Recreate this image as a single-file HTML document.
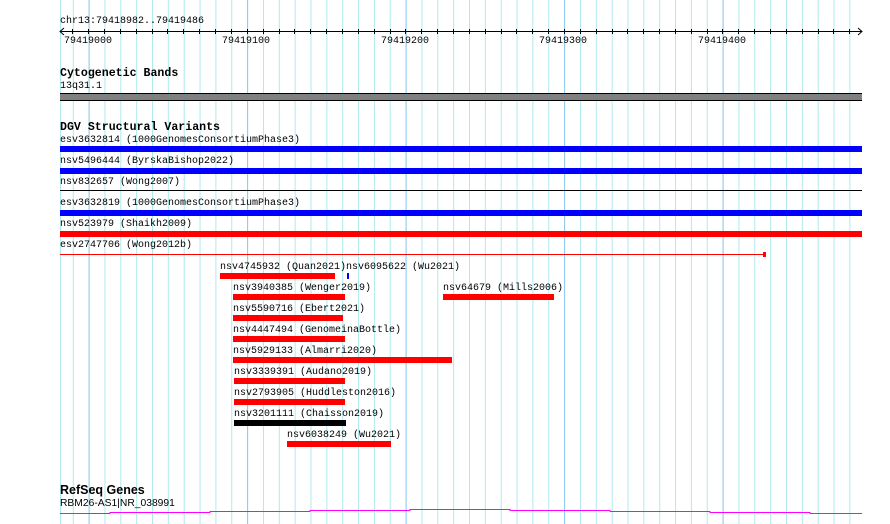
<!DOCTYPE html>
<html><head><meta charset="utf-8"><style>
body{margin:0;width:890px;height:524px;background:#fff;overflow:hidden;position:relative;font-family:"Liberation Mono",monospace;font-size:10px;color:#000}
.t{position:absolute;line-height:11px;white-space:pre;margin-top:1px}
.b{font-weight:bold;font-size:11.6px;line-height:12px}
svg{position:absolute;left:0;top:0}
</style></head><body>
<svg width="890" height="524" shape-rendering="crispEdges">
<defs>
<pattern id="mn" patternUnits="userSpaceOnUse" x="72.75" y="0" width="15.85" height="10"><rect x="0" y="0" width="1" height="10" fill="#aeeaee"/></pattern>
<pattern id="mj" patternUnits="userSpaceOnUse" x="88.6" y="0" width="158.5" height="10"><rect x="0" y="0" width="1" height="10" fill="#8fc8ee"/></pattern>
</defs>
<rect x="60" y="0" width="1" height="524" fill="#aeeaee"/>
<rect x="72" y="0" width="779" height="524" fill="url(#mn)"/>
<rect x="88" y="0" width="760" height="524" fill="url(#mj)"/>
<rect x="60" y="31" width="802" height="1" fill="#000"/>
<path d="M64 28 L60 31.5 L64 35 M858 28 L862 31.5 L858 35" stroke="#000" fill="none" shape-rendering="auto"/>
<g fill="#000">
<rect x="72" y="29" width="1" height="5"/><rect x="88" y="29" width="1" height="5"/><rect x="104" y="29" width="1" height="5"/><rect x="120" y="29" width="1" height="5"/><rect x="136" y="29" width="1" height="5"/><rect x="152" y="29" width="1" height="5"/><rect x="167" y="29" width="1" height="5"/><rect x="183" y="29" width="1" height="5"/><rect x="199" y="29" width="1" height="5"/><rect x="215" y="29" width="1" height="5"/><rect x="231" y="29" width="1" height="5"/><rect x="247" y="29" width="1" height="5"/><rect x="263" y="29" width="1" height="5"/><rect x="279" y="29" width="1" height="5"/><rect x="294" y="29" width="1" height="5"/><rect x="310" y="29" width="1" height="5"/><rect x="326" y="29" width="1" height="5"/><rect x="342" y="29" width="1" height="5"/><rect x="358" y="29" width="1" height="5"/><rect x="374" y="29" width="1" height="5"/><rect x="390" y="29" width="1" height="5"/><rect x="405" y="29" width="1" height="5"/><rect x="421" y="29" width="1" height="5"/><rect x="437" y="29" width="1" height="5"/><rect x="453" y="29" width="1" height="5"/><rect x="469" y="29" width="1" height="5"/><rect x="485" y="29" width="1" height="5"/><rect x="501" y="29" width="1" height="5"/><rect x="516" y="29" width="1" height="5"/><rect x="532" y="29" width="1" height="5"/><rect x="548" y="29" width="1" height="5"/><rect x="564" y="29" width="1" height="5"/><rect x="580" y="29" width="1" height="5"/><rect x="596" y="29" width="1" height="5"/><rect x="612" y="29" width="1" height="5"/><rect x="627" y="29" width="1" height="5"/><rect x="643" y="29" width="1" height="5"/><rect x="659" y="29" width="1" height="5"/><rect x="675" y="29" width="1" height="5"/><rect x="691" y="29" width="1" height="5"/><rect x="707" y="29" width="1" height="5"/><rect x="722" y="29" width="1" height="5"/><rect x="738" y="29" width="1" height="5"/><rect x="754" y="29" width="1" height="5"/><rect x="770" y="29" width="1" height="5"/><rect x="786" y="29" width="1" height="5"/><rect x="802" y="29" width="1" height="5"/><rect x="818" y="29" width="1" height="5"/><rect x="833" y="29" width="1" height="5"/><rect x="849" y="29" width="1" height="5"/>
</g>
<rect x="60" y="93" width="802" height="8" fill="#000"/>
<rect x="60" y="94" width="802" height="6" fill="#808080"/>
<rect x="60" y="146" width="802" height="6" fill="#0000ff"/>
<rect x="60" y="168" width="802" height="6" fill="#0000ff"/>
<rect x="60" y="190" width="802" height="1" fill="#000"/>
<rect x="60" y="210" width="802" height="6" fill="#0000ff"/>
<rect x="60" y="231" width="802" height="6" fill="#ff0000"/>
<rect x="60" y="254" width="705" height="1" fill="#ff0000"/>
<rect x="763" y="252" width="3" height="5" fill="#ff0000"/>
<rect x="220" y="273" width="115" height="6" fill="#ff0000"/>
<rect x="347" y="273" width="2" height="6" fill="#0000ff"/>
<rect x="233" y="294" width="112" height="6" fill="#ff0000"/>
<rect x="443" y="294" width="111" height="6" fill="#ff0000"/>
<rect x="233" y="315" width="110" height="6" fill="#ff0000"/>
<rect x="233" y="336" width="112" height="6" fill="#ff0000"/>
<rect x="233" y="357" width="219" height="6" fill="#ff0000"/>
<rect x="234" y="378" width="111" height="6" fill="#ff0000"/>
<rect x="234" y="399" width="111" height="6" fill="#ff0000"/>
<rect x="234" y="420" width="112" height="6" fill="#000"/>
<rect x="287" y="441" width="104" height="6" fill="#ff0000"/>
<path d="M60 513.5H110V512.5H210V511.5H310V510.5H410V509.5H510V510.5H610V511.5H710V512.5H810V513.5H862" stroke="#ff00ff" fill="none"/>
</svg>
<div class="t" style="left:60px;top:15px">chr13:79418982..79419486</div>
<div class="t" style="left:64px;top:35px">79419000</div>
<div class="t" style="left:222px;top:35px">79419100</div>
<div class="t" style="left:381px;top:35px">79419200</div>
<div class="t" style="left:539px;top:35px">79419300</div>
<div class="t" style="left:698px;top:35px">79419400</div>
<div class="t b" style="left:60px;top:67px">Cytogenetic Bands</div>
<div class="t" style="left:60px;top:80px">13q31.1</div>
<div class="t b" style="left:60px;top:121px">DGV Structural Variants</div>
<div class="t" style="left:60px;top:134px">esv3632814 (1000GenomesConsortiumPhase3)</div>
<div class="t" style="left:60px;top:155px">nsv5496444 (ByrskaBishop2022)</div>
<div class="t" style="left:60px;top:176px">nsv832657 (Wong2007)</div>
<div class="t" style="left:60px;top:197px">esv3632819 (1000GenomesConsortiumPhase3)</div>
<div class="t" style="left:60px;top:218px">nsv523979 (Shaikh2009)</div>
<div class="t" style="left:60px;top:239px">esv2747706 (Wong2012b)</div>
<div class="t" style="left:220px;top:261px">nsv4745932 (Quan2021)nsv6095622 (Wu2021)</div>
<div class="t" style="left:233px;top:282px">nsv3940385 (Wenger2019)</div>
<div class="t" style="left:443px;top:282px">nsv64679 (Mills2006)</div>
<div class="t" style="left:233px;top:303px">nsv5590716 (Ebert2021)</div>
<div class="t" style="left:233px;top:324px">nsv4447494 (GenomeinaBottle)</div>
<div class="t" style="left:233px;top:345px">nsv5929133 (Almarri2020)</div>
<div class="t" style="left:234px;top:366px">nsv3339391 (Audano2019)</div>
<div class="t" style="left:234px;top:387px">nsv2793905 (Huddleston2016)</div>
<div class="t" style="left:234px;top:408px">nsv3201111 (Chaisson2019)</div>
<div class="t" style="left:287px;top:429px">nsv6038249 (Wu2021)</div>
<div class="t" style="left:60px;top:483px;font-weight:bold;font-family:'Liberation Sans Narrow','Liberation Sans',sans-serif;font-size:12.5px;line-height:13px">RefSeq Genes</div>
<div class="t" style="left:60px;top:497px;font-family:'Liberation Sans Narrow','Liberation Sans',sans-serif;font-size:10.3px">RBM26-AS1|NR_038991</div>
</body></html>
